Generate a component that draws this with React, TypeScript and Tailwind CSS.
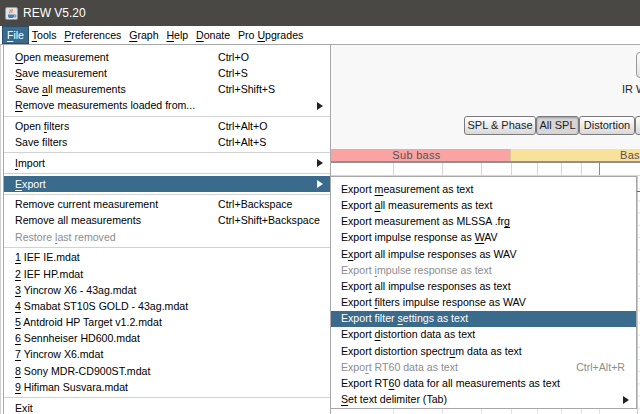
import React from "react";

type Entry =
  | "sep"
  | {
      label: string;
      u?: number;
      shortcut?: string;
      arrow?: boolean;
      disabled?: boolean;
      active?: boolean;
    };

const fileMenu: Entry[] = [
  { label: "Open measurement", u: 0, shortcut: "Ctrl+O" },
  { label: "Save measurement", u: 0, shortcut: "Ctrl+S" },
  { label: "Save all measurements", u: 5, shortcut: "Ctrl+Shift+S" },
  { label: "Remove measurements loaded from...", u: 0, arrow: true },
  "sep",
  { label: "Open filters", u: 5, shortcut: "Ctrl+Alt+O" },
  { label: "Save filters", shortcut: "Ctrl+Alt+S" },
  "sep",
  { label: "Import", u: 0, arrow: true },
  "sep",
  { label: "Export", u: 0, arrow: true, active: true },
  "sep",
  { label: "Remove current measurement", shortcut: "Ctrl+Backspace" },
  { label: "Remove all measurements", shortcut: "Ctrl+Shift+Backspace" },
  { label: "Restore last removed", u: 8, disabled: true },
  "sep",
  { label: "1 IEF IE.mdat", u: 0 },
  { label: "2 IEF HP.mdat", u: 0 },
  { label: "3 Yincrow X6 - 43ag.mdat", u: 0 },
  { label: "4 Smabat ST10S GOLD - 43ag.mdat", u: 0 },
  { label: "5 Antdroid HP Target v1.2.mdat", u: 0 },
  { label: "6 Sennheiser HD600.mdat", u: 0 },
  { label: "7 Yincrow X6.mdat", u: 0 },
  { label: "8 Sony MDR-CD900ST.mdat", u: 0 },
  { label: "9 Hifiman Susvara.mdat", u: 0 },
  "sep",
  { label: "Exit", u: 1 },
];

const exportMenu: Entry[] = [
  { label: "Export measurement as text", u: 7 },
  { label: "Export all measurements as text", u: 7 },
  { label: "Export measurement as MLSSA .frg", u: 31 },
  { label: "Export impulse response as WAV", u: 27 },
  { label: "Export all impulse responses as WAV", u: 1 },
  { label: "Export impulse response as text", u: 7, disabled: true },
  { label: "Export all impulse responses as text", u: 5 },
  { label: "Export filters impulse response as WAV", u: 7 },
  { label: "Export filter settings as text", u: 14, active: true },
  { label: "Export distortion data as text", u: 7 },
  { label: "Export distortion spectrum data as text", u: 24 },
  { label: "Export RT60 data as text", u: 4, disabled: true, shortcut: "Ctrl+Alt+R" },
  { label: "Export RT60 data for all measurements as text", u: 9 },
  { label: "Set text delimiter (Tab)", u: 0, arrow: true },
];

const menuBar = [
  { label: "File", u: 0 },
  { label: "Tools", u: 0 },
  { label: "Preferences", u: 0 },
  { label: "Graph", u: 0 },
  { label: "Help", u: 0 },
  { label: "Donate", u: 0 },
  { label: "Pro Upgrades", u: 4 },
];

// x positions of the frequency grid lines, relative to the graph panel
const gridX = [62, 111, 150, 180, 206, 230, 250, 268];

function Mnemonic({ text, u }: { text: string; u?: number }) {
  if (u === undefined) return <span>{text}</span>;
  return (
    <span className="whitespace-pre">
      {text.slice(0, u)}
      <span className="underline decoration-1 underline-offset-[2px]">{text[u]}</span>
      {text.slice(u + 1)}
    </span>
  );
}

function Arrow({ white }: { white?: boolean }) {
  return (
    <svg width="6" height="8" viewBox="0 0 6 8">
      <polygon points="0,0 6,4 0,8" fill={white ? "#ffffff" : "#222222"} />
    </svg>
  );
}

function Separator() {
  return (
    <div className="h-[4.5px] flex items-center">
      <div className="h-px w-full bg-[#d2d2d2]" />
    </div>
  );
}

function FileMenu() {
  return (
    <div className="absolute left-[3px] top-[44px] w-[328px] h-[380px] border border-[#a8a8a8] bg-white pt-[4px]">
      {fileMenu.map((e, i) =>
        e === "sep" ? (
          <Separator key={i} />
        ) : (
          <div
            key={i}
            className={`h-[16.2px] flex items-center pl-[11px] pr-[7px] ${
              e.active ? "bg-[#3a6a8c] text-white" : e.disabled ? "text-[#8d8d8d]" : "text-black"
            }`}
          >
            <span className="w-[203px] whitespace-nowrap">
              <Mnemonic text={e.label} u={e.u} />
            </span>
            <span className="flex-1 whitespace-nowrap">{e.shortcut}</span>
            {e.arrow && <Arrow white={e.active} />}
          </div>
        )
      )}
    </div>
  );
}

function ExportMenu() {
  return (
    <div className="absolute left-[330px] top-[176px] w-[307px] border border-[#a8a8a8] bg-white pt-[4px]">
      {exportMenu.map((e, i) =>
        e === "sep" ? (
          <Separator key={i} />
        ) : (
          <div
            key={i}
            className={`h-[16.2px] flex items-center pl-[10px] ${e.arrow ? "pr-[7px]" : "pr-[11px]"} ${
              e.active ? "bg-[#3a6a8c] text-white" : e.disabled ? "text-[#8d8d8d]" : "text-black"
            }`}
          >
            <span className="flex-1 whitespace-nowrap">
              <Mnemonic text={e.label} u={e.u} />
            </span>
            {e.shortcut && <span className="whitespace-nowrap">{e.shortcut}</span>}
            {e.arrow && <Arrow white={e.active} />}
          </div>
        )
      )}
    </div>
  );
}

function JavaIcon() {
  return (
    <svg width="13" height="13" viewBox="0 0 13 13">
      <rect x="0.5" y="0.5" width="12" height="12" rx="1.5" fill="#dde4ec" stroke="#8d9aa8" />
      <path d="M3 7.5h6v1.8a1.7 1.7 0 0 1-1.7 1.7H4.7A1.7 1.7 0 0 1 3 9.3z" fill="#4f78ad" />
      <path d="M9 8h1a1 1 0 0 1 0 2H9" fill="none" stroke="#4f78ad" strokeWidth="0.9" />
      <path d="M5 2.5c1.2 1.1-1 2.1 0 3.8M7 2c1.2 1.1-1 2.1 0 3.8" fill="none" stroke="#e8691c" strokeWidth="1" />
    </svg>
  );
}

function ToolButton({ label, pressed, w }: { label?: string; pressed?: boolean; w: string }) {
  return (
    <div
      className={`${w} h-[19px] shrink-0 flex items-center justify-center border border-[#7b7b7b] rounded-[3px] text-[11px] text-[#1e1e1e] whitespace-nowrap ${
        pressed
          ? "bg-[#d6d6d6] shadow-[inset_0_1px_2px_rgba(0,0,0,0.3)]"
          : "bg-gradient-to-b from-[#ffffff] to-[#d8d8d8]"
      }`}
    >
      {label}
    </div>
  );
}

function GraphPanel() {
  return (
    <div className="flex-1 flex flex-col bg-[#f8f8f8] border-l border-[#a9a9a9] overflow-hidden">
      <div className="h-[71px] shrink-0 pt-[7px]">
        <div className="ml-[291px] w-[80px] flex flex-col">
          <div className="ml-[14px] w-[30px] h-[26px] rounded-[4px] border border-[#9a9a9a] bg-gradient-to-b from-[#fdfdfd] to-[#e2e2e2]" />
          <span className="mt-[5px] text-[11px] leading-[12px] text-[#1e1e1e] whitespace-nowrap">IR Windows</span>
        </div>
      </div>
      <div className="h-[19px] shrink-0 flex ml-[133px]">
        <ToolButton label="SPL & Phase" w="w-[72px]" />
        <ToolButton label="All SPL" w="w-[43px]" pressed />
        <ToolButton label="Distortion" w="w-[56px]" />
        <ToolButton w="w-[40px]" />
      </div>
      <div className="mt-[14px] h-[12px] shrink-0 flex text-[11px] leading-[12px] text-[#5a5050] tracking-[0.3px]">
        <div className="w-[180px] shrink-0 bg-[#f9a3a3] pr-[8px] text-center border-r border-[#d8c49a]">Sub bass</div>
        <div className="flex-1 bg-[#f8e19b] pl-[109px] whitespace-nowrap">Bass</div>
      </div>
      <div className="h-[2px] shrink-0 bg-[#8f8f8f]" />
      <svg width="309" height="13" className="shrink-0 bg-white">
        {gridX.map((x, i) => (
          <line key={i} x1={x + 0.5} y1="0" x2={x + 0.5} y2="13" stroke={i === 7 ? "#8a8a8a" : "#d6d6d6"} />
        ))}
        <line x1="0" y1="12.5" x2="309" y2="12.5" stroke="#d6d6d6" />
      </svg>
      <svg width="309" height="238" className="shrink-0 bg-white">
        {Array.from({ length: 19 }, (_, k) => (
          <line key={k} x1="0" y1={12.2 * (k + 1) + 0.5} x2="309" y2={12.2 * (k + 1) + 0.5} stroke="#e2e2e2" />
        ))}
        {gridX.map((x, i) => (
          <line key={i} x1={x + 0.5} y1="0" x2={x + 0.5} y2="238" stroke="#e2e2e2" />
        ))}
        <line x1="306.5" y1="0" x2="306.5" y2="238" stroke="#c9c9c9" />
        <line x1="306" y1="15.5" x2="309" y2="15.5" stroke="#d23a3a" />
        <line x1="0" y1="232.5" x2="306" y2="232.5" stroke="#bdbdbd" />
      </svg>
    </div>
  );
}

export default function App() {
  return (
    <div className="relative w-[640px] h-[414px] overflow-hidden bg-white font-['Liberation_Sans',Arial,sans-serif] text-[10.6px] leading-none select-none">
      <div className="h-[26px] flex items-center gap-[5px] pl-[5px] bg-[#4a4845]">
        <JavaIcon />
        <span className="text-[12px] text-white">REW V5.20</span>
      </div>
      <div className="h-[19px] flex items-center pl-[3px] border-b border-[#ababab] bg-white">
        {menuBar.map((m, i) => (
          <div
            key={m.label}
            className={`h-[16px] flex items-center px-[3.9px] text-[10.6px] whitespace-nowrap ${
              i === 0 ? "bg-[#3a6a8c] text-white outline outline-1 outline-[#2b4f6b]" : "text-black"
            }`}
          >
            <Mnemonic text={m.label} u={m.u} />
          </div>
        ))}
      </div>
      <div className="flex h-[369px]">
        <div className="w-[330px] shrink-0 border-l border-[#cfcfcf] bg-white" />
        <GraphPanel />
      </div>
      <FileMenu />
      <ExportMenu />
    </div>
  );
}
